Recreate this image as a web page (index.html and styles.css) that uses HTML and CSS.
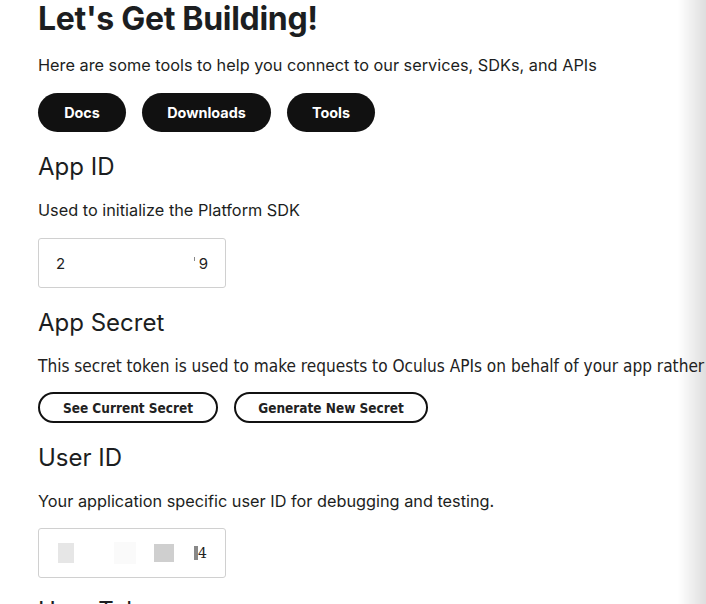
FILE: index.html
```html
<!DOCTYPE html>
<html>
<head>
<meta charset="utf-8">
<link rel="stylesheet" href="styles.css">
</head>
<body>
<main class="page">
  <h1 class="title">Let's Get Building!</h1>
  <p class="lead">Here are some tools to help you connect to our services, SDKs, and APIs</p>
  <div class="btn-row">
    <button class="pill">Docs</button>
    <button class="pill pill-wide">Downloads</button>
    <button class="pill">Tools</button>
  </div>

  <h2 class="section">App ID</h2>
  <p class="desc">Used to initialize the Platform SDK</p>
  <div class="field">
    <span class="ch">2</span>
    <span class="spacer"></span>
    <span class="tick"></span><span class="ch">9</span>
  </div>

  <h2 class="section">App Secret</h2>
  <p class="desc narrow">This secret token is used to make requests to Oculus APIs on behalf of your app rather</p>
  <div class="btn-row outline-row">
    <button class="outline">See Current Secret</button>
    <button class="outline outline-wide">Generate New Secret</button>
  </div>

  <h2 class="section">User ID</h2>
  <p class="desc">Your application specific user ID for debugging and testing.</p>
  <div class="field field-user">
    <span class="blk blk-a"></span>
    <span class="blk blk-b"></span>
    <span class="blk blk-c"></span>
    <span class="blk blk-d"></span><span class="ch serif">4</span>
  </div>

  <h2 class="section last">User Token</h2>
</main>
<div class="edge-shadow"></div>
</body>
</html>
```
FILE: styles.css
```css
html, body {
  margin: 0;
  padding: 0;
  background: #fff;
  overflow: hidden;
  height: 604px;
}
body {
  font-family: Inter, "Noto Sans", sans-serif;
  color: #1c1e21;
  white-space: nowrap;
}
.page {
  padding: 0 0 0 38px;
}
.title {
  margin: 0;
  font-size: 32px;
  line-height: 38px;
  font-weight: 700;
  letter-spacing: -0.3px;
}
.lead {
  margin: 15px 0 0;
  font-size: 16.3px;
  line-height: 24px;
}
.btn-row {
  display: flex;
  gap: 16px;
  margin-top: 16px;
}
.pill {
  height: 39px;
  width: 88px;
  border: none;
  border-radius: 20px;
  background: #111;
  color: #fff;
  font-family: Inter, sans-serif;
  font-weight: 700;
  font-size: 14.4px;
  padding: 0;
}
.pill-wide { width: 129px; }
.section {
  margin: 20px 0 0;
  font-size: 24px;
  line-height: 30px;
  font-weight: 400;
}
.desc {
  margin: 17px 0 0;
  font-size: 16.3px;
  line-height: 22px;
}
.narrow {
  font-family: "DejaVu Sans Condensed", sans-serif;
  font-size: 17.1px;
  color: #222;
}
.field {
  margin-top: 17px;
  border: 1px solid #d0d0d0;
  border-radius: 3px;
  display: flex;
  align-items: center;
  padding: 0 17px;
  box-sizing: border-box;
  width: 188px;
  height: 50px;
  font-size: 15px;
}
.ch { color: #222; }
.spacer { flex: 1; }
.tick {
  width: 1px;
  height: 4px;
  background: #888;
  margin-right: 4px;
  transform: translateY(-4px);
}
.outline-row { margin-top: 15px; }
.outline {
  height: 31px;
  border: 2px solid #111;
  border-radius: 16px;
  background: #fff;
  color: #222;
  font-family: "DejaVu Sans Condensed", sans-serif;
  font-weight: 700;
  font-size: 13.5px;
  padding: 0;
  width: 180px;
}
.outline-wide { width: 194px; }
.field-user { margin-top: 16px; padding-left: 19px; padding-right: 18px; }
.blk { display: inline-block; }
.blk-a { width: 16px; height: 20px; background: #e6e6e6; }
.blk-b { width: 22px; height: 22px; background: #fafafa; margin-left: 40px; }
.blk-c { width: 20px; height: 18px; background: #cfcfcf; margin-left: 18px; }
.blk-d { width: 4px; height: 14px; background: #888; margin-left: 20px; }
.serif { font-family: "DejaVu Serif", serif; font-size: 14px; }
.last { margin-top: 18px; }
.edge-shadow {
  position: fixed;
  top: 0;
  right: 0;
  width: 28px;
  height: 100%;
  background: linear-gradient(to right, rgba(0,0,0,0), rgba(0,0,0,0.13));
  pointer-events: none;
}
```
